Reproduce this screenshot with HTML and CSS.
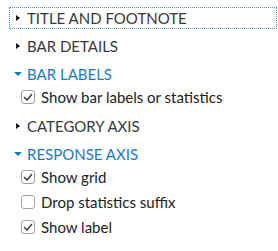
FILE: index.html
```html
<!DOCTYPE html>
<html>

<head>
    <title>Options</title>
    <link rel="stylesheet" href="styles.css">
</head>

<body>
    <div class="panel">
        <div class="head focused">
            <span class="arrow"><svg width="4" height="6" viewBox="0 0 4 6"><path d="M0 0 L4 3 L0 6 Z" fill="#111"/></svg></span>
            <span class="label">TITLE AND FOOTNOTE</span>
        </div>
        <div class="head">
            <span class="arrow"><svg width="4" height="6" viewBox="0 0 4 6"><path d="M0 0 L4 3 L0 6 Z" fill="#111"/></svg></span>
            <span class="label">BAR DETAILS</span>
        </div>
        <div class="head open">
            <span class="arrow"><svg width="8" height="4" viewBox="0 0 8 4"><path d="M0 0 L8 0 L4 4 Z" fill="#1a7ac4"/></svg></span>
            <span class="label">BAR LABELS</span>
        </div>
        <div class="options">
            <label class="option"><span class="box checked"><svg width="10" height="8" viewBox="0 0 10 8"><path d="M1 4 L4 7 L9 1" fill="none" stroke="#333" stroke-width="1.4"/></svg></span>Show bar labels or statistics</label>
        </div>
        <div class="head">
            <span class="arrow"><svg width="4" height="6" viewBox="0 0 4 6"><path d="M0 0 L4 3 L0 6 Z" fill="#111"/></svg></span>
            <span class="label">CATEGORY AXIS</span>
        </div>
        <div class="head open">
            <span class="arrow"><svg width="8" height="4" viewBox="0 0 8 4"><path d="M0 0 L8 0 L4 4 Z" fill="#1a7ac4"/></svg></span>
            <span class="label">RESPONSE AXIS</span>
        </div>
        <div class="options">
            <label class="option"><span class="box checked"><svg width="10" height="8" viewBox="0 0 10 8"><path d="M1 4 L4 7 L9 1" fill="none" stroke="#333" stroke-width="1.4"/></svg></span>Show grid</label>
            <label class="option"><span class="box"></span>Drop statistics suffix</label>
            <label class="option"><span class="box checked"><svg width="10" height="8" viewBox="0 0 10 8"><path d="M1 4 L4 7 L9 1" fill="none" stroke="#333" stroke-width="1.4"/></svg></span>Show label</label>
        </div>
    </div>
</body>

</html>
```

FILE: styles.css
```css
body {
    margin: 0;
    background: #fff;
    font-family: Lato, "Open Sans", sans-serif;
}

.panel {
    padding-top: 7px;
}

.head {
    display: flex;
    align-items: center;
    height: 20px;
    margin: 6px 1px 0 9px;
    border: 1px dotted transparent;
    color: #383838;
    font-size: 15px;
}

.head:first-child {
    margin-top: 0;
}

.head.focused {
    border-color: #4a95cc;
}

.head.open {
    color: #1a7ac4;
}

.head .arrow {
    display: flex;
    justify-content: center;
    align-items: center;
    width: 16px;
}

.head .label {
    padding-left: 1px;
}

.options {
    margin: -1px 0 5px 0;
}

.option {
    display: flex;
    align-items: center;
    height: 25px;
    padding-left: 21px;
    color: #222;
    font-size: 15px;
}

.option .box {
    display: flex;
    justify-content: center;
    align-items: center;
    box-sizing: border-box;
    width: 14px;
    height: 14px;
    margin-right: 6px;
    border: 1.5px solid #a0a0a0;
    border-radius: 3px;
}
```
